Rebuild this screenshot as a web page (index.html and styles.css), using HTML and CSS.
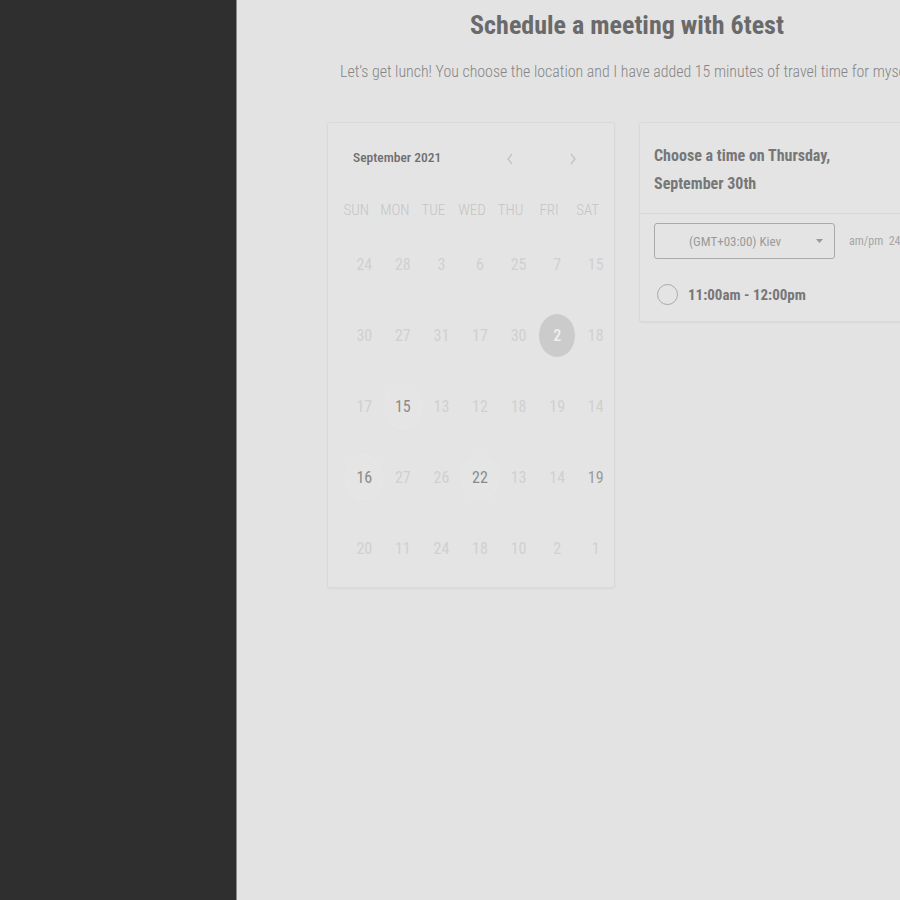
FILE: index.html
```html
<!DOCTYPE html>
<html>
<head>
<meta charset="utf-8">
<link rel="stylesheet" href="styles.css">
</head>
<body>
<div class="layout">
  <aside class="sidebar"></aside>
  <main class="main">
    <div class="content">
      <h1 class="title">Schedule a meeting with 6test</h1>
      <p class="subtitle">Let’s get lunch! You choose the location and I have added 15 minutes of travel time for myself</p>
      <div class="cards">
        <section class="card calendar">
          <div class="cal-head">
            <span class="month">September 2021</span>
            <div class="nav">
              <svg class="arrow" width="10" height="14" viewBox="0 0 10 14"><path d="M7 2 L3 7 L7 12" fill="none" stroke="#c4c4c4" stroke-width="1.4"/></svg>
              <svg class="arrow" width="10" height="14" viewBox="0 0 10 14"><path d="M3 2 L7 7 L3 12" fill="none" stroke="#c4c4c4" stroke-width="1.4"/></svg>
            </div>
          </div>
          <div class="grid dow">
            <span>SUN</span><span>MON</span><span>TUE</span><span>WED</span><span>THU</span><span>FRI</span><span>SAT</span>
          </div>
          <div class="grid dates">
            <span class="d">24</span><span class="d">28</span><span class="d">3</span><span class="d">6</span><span class="d">25</span><span class="d">7</span><span class="d">15</span>
            <span class="d">30</span><span class="d">27</span><span class="d">31</span><span class="d">17</span><span class="d">30</span><span class="d sel"><b>2</b></span><span class="d">18</span>
            <span class="d">17</span><span class="d av"><b>15</b></span><span class="d">13</span><span class="d">12</span><span class="d">18</span><span class="d">19</span><span class="d">14</span>
            <span class="d av"><b>16</b></span><span class="d">27</span><span class="d">26</span><span class="d av"><b>22</b></span><span class="d">13</span><span class="d">14</span><span class="d dark">19</span>
            <span class="d">20</span><span class="d">11</span><span class="d">24</span><span class="d">18</span><span class="d">10</span><span class="d">2</span><span class="d">1</span>
          </div>
        </section>
        <section class="card times">
          <div class="times-head">Choose a time on Thursday,<br>September 30th</div>
          <div class="times-body">
            <div class="controls">
              <div class="select">
                <span>(GMT+03:00) Kiev</span>
                <svg class="caret" width="7" height="4" viewBox="0 0 7 4"><path d="M0 0 L7 0 L3.5 4 Z" fill="#999"/></svg>
              </div>
              <span class="fmt">am/pm&nbsp; 24h</span>
            </div>
            <div class="slot">
              <span class="radio"></span>
              <span class="slot-text">11:00am - 12:00pm</span>
            </div>
          </div>
        </section>
      </div>
    </div>
  </main>
</div>
</body>
</html>
```
FILE: styles.css
```css
* { box-sizing: border-box; }
html, body { margin: 0; padding: 0; }
body {
  width: 900px;
  height: 900px;
  overflow: hidden;
  font-family: Roboto, "Liberation Sans", sans-serif;
  font-stretch: 85%;
  background: #e3e3e3;
}
.layout {
  display: flex;
  height: 900px;
}
.sidebar {
  width: 237px;
  flex: none;
  background: #2f2f2f;
  border-right: 1px solid #8a8a8a;
}
.main {
  flex: none;
  width: 663px;
  overflow: hidden;
}
.content {
  width: 600px;
  margin-left: 90px;
}
.title {
  margin: 0;
  padding-top: 9px;
  text-align: center;
  font-size: 26px;
  font-weight: 700;
  line-height: 32px;
  color: #6a6a6a;
  white-space: nowrap;
}
.subtitle {
  margin: 21px -40px 0;
  text-align: center;
  font-size: 15.9px;
  font-weight: 300;
  line-height: 20px;
  color: #858585;
  white-space: nowrap;
}
.cards {
  display: flex;
  gap: 24px;
  margin-top: 40px;
  align-items: flex-start;
}
.card {
  flex: none;
  background: #e4e4e4;
  border: 1px solid #d9d9d9;
  border-radius: 3px;
  box-shadow: 0 1px 2px rgba(0,0,0,0.05);
}
.calendar {
  width: 288px;
  height: 466px;
  padding: 0 0 0 9px;
}
.cal-head {
  display: flex;
  align-items: center;
  justify-content: space-between;
  height: 72px;
  padding: 0 0 0 16px;
}
.month {
  font-size: 13.5px;
  font-weight: 500;
  color: #6e6e6e;
  margin-top: -4px;
}
.nav {
  display: flex;
  gap: 53px;
  margin-right: 36px;
}
.grid {
  display: grid;
  grid-template-columns: repeat(7, 1fr);
  text-align: center;
}
.dow {
  width: 270px;
  font-size: 15px;
  font-weight: 300;
  color: #c4c4c4;
  height: 30px;
  line-height: 30px;
}
.dates {
  width: 270px;
  margin-left: 8px;
  grid-auto-rows: 71px;
  padding-top: 4px;
}
.d {
  display: flex;
  align-items: center;
  justify-content: center;
  font-size: 16px;
  color: #d0d0d0;
}
.d b {
  font-weight: 400;
  display: flex;
  align-items: center;
  justify-content: center;
  width: 36px;
  height: 43px;
  border-radius: 50%;
}
.d.sel b {
  background: #cbcbcb;
  color: #f0f0f0;
  font-weight: 500;
}
.d.av b {
  color: #8a8a8a;
  background: #e5e5e5;
  box-shadow: 0 0 0 1px #e7e7e7;
}
.d.dark { color: #9a9a9a; }
.times {
  width: 290px;
  height: 200px;
}
.times-head {
  height: 91px;
  padding: 19px 14px 0;
  font-size: 16px;
  font-weight: 700;
  line-height: 28px;
  color: #777;
  border-bottom: 1px solid #d8d8d8;
}
.times-body {
  padding: 9px 14px 0;
}
.controls {
  display: flex;
  align-items: center;
  gap: 14px;
}
.select {
  width: 181px;
  height: 36px;
  border: 1px solid #a9a9a9;
  border-radius: 3px;
  display: flex;
  align-items: center;
  padding: 0 11px 0 34px;
  font-size: 13px;
  color: #9a9a9a;
}
.select span { flex: 1; }
.caret { flex: none; }
.fmt {
  font-size: 12px;
  color: #a6a6a6;
  white-space: nowrap;
}
.slot {
  display: flex;
  align-items: center;
  gap: 10px;
  margin-top: 25px;
  padding-left: 3px;
}
.radio {
  width: 21px;
  height: 21px;
  border: 1.5px solid #a9a9a9;
  border-radius: 50%;
}
.slot-text {
  font-size: 15px;
  font-weight: 700;
  color: #777;
}
```
